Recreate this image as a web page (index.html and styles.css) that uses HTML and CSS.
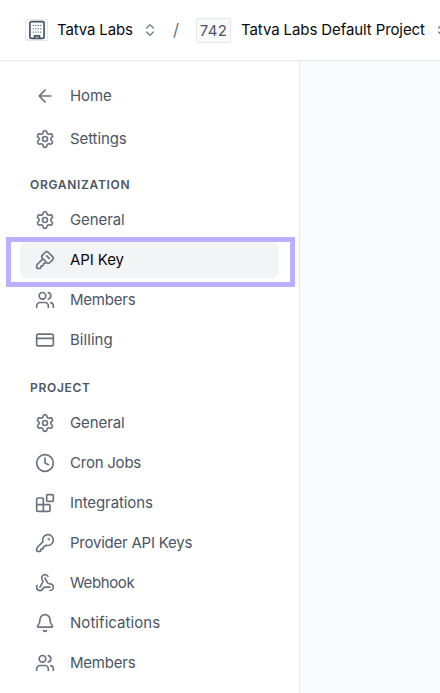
FILE: index.html
```html
<!DOCTYPE html>
<html lang="en">
<head>
<meta charset="utf-8">
<title>API Key</title>
<link rel="stylesheet" href="styles.css">
</head>
<body>
<svg class="defs" width="0" height="0">
  <symbol id="gear" viewBox="0 0 24 24"><path d="M9.671 4.136a2.34 2.34 0 0 1 4.659 0 2.34 2.34 0 0 0 3.319 1.915 2.34 2.34 0 0 1 2.33 4.033 2.34 2.34 0 0 0 0 3.831 2.34 2.34 0 0 1-2.33 4.033 2.34 2.34 0 0 0-3.319 1.915 2.34 2.34 0 0 1-4.659 0 2.34 2.34 0 0 0-3.32-1.915 2.34 2.34 0 0 1-2.33-4.033 2.34 2.34 0 0 0 0-3.831A2.34 2.34 0 0 1 6.35 6.051a2.34 2.34 0 0 0 3.319-1.915"/><circle cx="12" cy="12" r="3"/></symbol>
  <symbol id="users" viewBox="0 0 24 24"><path d="M16 21v-2a4 4 0 0 0-4-4H6a4 4 0 0 0-4 4v2"/><circle cx="9" cy="7" r="4"/><path d="M22 21v-2a4 4 0 0 0-3-3.87M16 3.13a4 4 0 0 1 0 7.75"/></symbol>
  <symbol id="sort" viewBox="0 0 24 24"><path d="m7 15 5 5 5-5M7 9l5-5 5 5"/></symbol>
</svg>
<header class="topbar">
  <span class="org-icon"><svg class="building" viewBox="0 0 24 24"><rect x="3.5" y="2" width="17" height="20" rx="2"/><path d="M9 22v-3h6v3"/><path class="windows" d="M7.5 6.5h.01M10.5 6.5h.01M13.5 6.5h.01M16.5 6.5h.01M7.5 10.5h.01M10.5 10.5h.01M13.5 10.5h.01M16.5 10.5h.01M7.5 14.5h.01M10.5 14.5h.01M13.5 14.5h.01M16.5 14.5h.01"/></svg></span>
  <span class="org-name">Tatva Labs</span>
  <svg class="sort"><use href="#sort"/></svg>
  <span class="slash">/</span>
  <span class="badge">742</span>
  <span class="project-name">Tatva Labs Default Project</span>
  <svg class="sort"><use href="#sort"/></svg>
</header>
<div class="body">
  <nav class="sidebar">
    <a class="item home"><svg class="icon" viewBox="0 0 24 24"><path d="m12 19-7-7 7-7M19 12H5"/></svg><span>Home</span></a>
    <a class="item"><svg class="icon"><use href="#gear"/></svg><span>Settings</span></a>
    <h2 class="heading org">Organization</h2>
    <a class="item"><svg class="icon"><use href="#gear"/></svg><span>General</span></a>
    <a class="item active"><svg class="icon" viewBox="0 0 24 24"><path d="M12.4 2.7a2.5 2.5 0 0 1 3.4 0l5.5 5.5a2.5 2.5 0 0 1 0 3.4l-3.7 3.7a2.5 2.5 0 0 1-3.4 0L8.7 9.8a2.5 2.5 0 0 1 0-3.4zM14 7l3 3M9.4 10.6l-6.814 6.814A2 2 0 0 0 2 18.828V21a1 1 0 0 0 1 1h3a1 1 0 0 0 1-1v-1a1 1 0 0 1 1-1h1a1 1 0 0 0 1-1v-1a1 1 0 0 1 1-1h.172a2 2 0 0 0 1.414-.586l.814-.814"/></svg><span>API Key</span></a>
    <a class="item tight"><svg class="icon"><use href="#users"/></svg><span>Members</span></a>
    <a class="item loose"><svg class="icon" viewBox="0 0 24 24"><rect x="2" y="5" width="20" height="14" rx="2"/><path d="M2 10h20"/></svg><span>Billing</span></a>
    <h2 class="heading project">Project</h2>
    <a class="item"><svg class="icon"><use href="#gear"/></svg><span>General</span></a>
    <a class="item tight"><svg class="icon" viewBox="0 0 24 24"><circle cx="12" cy="12" r="10"/><path d="M12 6v6l4 2"/></svg><span>Cron Jobs</span></a>
    <a class="item"><svg class="icon" viewBox="0 0 24 24"><rect x="14" y="2" width="8" height="8" rx="1"/><path d="M10 22V7a1 1 0 0 0-1-1H4a2 2 0 0 0-2 2v12a2 2 0 0 0 2 2h12a2 2 0 0 0 2-2v-5a1 1 0 0 0-1-1H2"/></svg><span>Integrations</span></a>
    <a class="item tight"><svg class="icon" viewBox="0 0 24 24"><path d="M2.586 17.414A2 2 0 0 0 2 18.828V21a1 1 0 0 0 1 1h3a1 1 0 0 0 1-1v-1a1 1 0 0 1 1-1h1a1 1 0 0 0 1-1v-1a1 1 0 0 1 1-1h.172a2 2 0 0 0 1.414-.586l.814-.814a6.5 6.5 0 1 0-4-4z"/><circle cx="16.5" cy="7.5" r=".5"/></svg><span>Provider API Keys</span></a>
    <a class="item tighter"><svg class="icon" viewBox="0 0 24 24"><path d="M18 16.98h-5.99c-1.1 0-1.95.94-2.48 1.9A4 4 0 0 1 2 17c.01-.7.2-1.4.57-2M6 17l3.13-5.78c.53-.97.1-2.18-.5-3.1a4 4 0 1 1 6.89-4.06M12 6l3.13 5.73C15.66 12.7 16.9 13 18 13a4 4 0 0 1 0 8"/></svg><span>Webhook</span></a>
    <a class="item loose"><svg class="icon" viewBox="0 0 24 24"><path d="M10.268 21a2 2 0 0 0 3.464 0M3.262 15.326A1 1 0 0 0 4 17h16a1 1 0 0 0 .74-1.673C19.41 13.956 18 12.499 18 8A6 6 0 0 0 6 8c0 4.499-1.411 5.956-2.738 7.326"/></svg><span>Notifications</span></a>
    <a class="item tight"><svg class="icon"><use href="#users"/></svg><span>Members</span></a>
  </nav>
  <main class="content"></main>
</div>
</body>
</html>
```
FILE: styles.css
```css
* { box-sizing: border-box; }
body {
  margin: 0;
  height: 693px;
  overflow: hidden;
  display: flex;
  flex-direction: column;
  background: #fff;
  color: #4b5563;
  font: 15px/20px Inter, "Liberation Sans", sans-serif;
  letter-spacing: -.1px;
}
.defs { position: absolute; }
svg {
  fill: none;
  stroke: #6b7280;
  stroke-width: 2;
  stroke-linecap: round;
  stroke-linejoin: round;
  flex: none;
}
.topbar {
  height: 61px;
  flex: none;
  display: flex;
  align-items: center;
  padding-left: 25px;
  border-bottom: 1px solid #e5e7eb;
  color: #09090b;
  white-space: nowrap;
}
.org-icon {
  width: 23px;
  height: 22px;
  display: flex;
  align-items: center;
  justify-content: center;
  flex: none;
  border: 1px solid #e5e7eb;
  border-radius: 2px;
  background: #f9fafb;
}
.building { width: 20px; height: 20px; stroke: #475569; }
.windows { stroke-width: 1.5; }
.org-name { width: 76px; flex: none; margin-left: 9px; letter-spacing: -.15px; }
.sort { width: 16px; height: 16px; margin-left: 9px; stroke-width: 1.8; }
.slash { width: 8px; flex: none; margin-left: 15px; color: #6b7280; font-size: 17px; }
.badge {
  width: 35px;
  height: 25px;
  flex: none;
  margin-left: 15px;
  border: 1px solid #e5e7eb;
  border-radius: 2px;
  background: #f9fafb;
  color: #4b5563;
  line-height: 23px;
  text-align: center;
  letter-spacing: .4px;
}
.project-name { width: 184px; flex: none; margin-left: 10px; }
.body { flex: 1; min-height: 0; display: flex; }
.sidebar {
  width: 300px;
  flex: none;
  padding: 17px 20px 0;
  border-right: 1px solid #e5e7eb;
}
.content { flex: 1; background: #f9fafb; }
.item {
  position: relative;
  height: 36px;
  margin-bottom: 4px;
  padding-left: 15px;
  display: flex;
  align-items: center;
  gap: 15px;
  border-radius: 6px;
}
.home { margin-bottom: 7px; }
.icon { width: 20px; height: 20px; }
.tight { letter-spacing: -.23px; }
.tighter { letter-spacing: -.4px; }
.loose { letter-spacing: .05px; }
.active { background: #f3f4f6; color: #09090b; }
.active::after {
  content: "";
  box-sizing: border-box;
  position: absolute;
  left: -14px;
  top: -5px;
  width: 289px;
  height: 50px;
  border: 5px solid #bbb0fd;
}
.heading {
  margin: 0 0 0 10px;
  height: 16px;
  font-size: 12px;
  line-height: 16px;
  font-weight: 600;
  letter-spacing: .7px;
  text-transform: uppercase;
}
.org { margin-top: 20px; margin-bottom: 9px; }
.project { margin-top: 22px; margin-bottom: 9px; }
```
